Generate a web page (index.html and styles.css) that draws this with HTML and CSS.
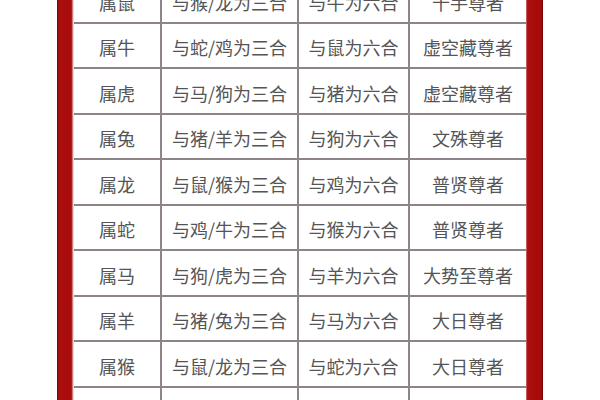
FILE: index.html
```html
<!DOCTYPE html>
<html lang="zh-CN">
<head>
<meta charset="utf-8">
<title>生肖三合六合守护神</title>
<link rel="stylesheet" href="styles.css">
</head>
<body>
<div class="frame">
  <div class="bar bar-left"></div>
  <div class="table">
    <div class="cell">属鼠</div><div class="cell">与猴/龙为三合</div><div class="cell">与牛为六合</div><div class="cell">千手尊者</div>
    <div class="cell">属牛</div><div class="cell">与蛇/鸡为三合</div><div class="cell">与鼠为六合</div><div class="cell">虚空藏尊者</div>
    <div class="cell">属虎</div><div class="cell">与马/狗为三合</div><div class="cell">与猪为六合</div><div class="cell">虚空藏尊者</div>
    <div class="cell">属兔</div><div class="cell">与猪/羊为三合</div><div class="cell">与狗为六合</div><div class="cell">文殊尊者</div>
    <div class="cell">属龙</div><div class="cell">与鼠/猴为三合</div><div class="cell">与鸡为六合</div><div class="cell">普贤尊者</div>
    <div class="cell">属蛇</div><div class="cell">与鸡/牛为三合</div><div class="cell">与猴为六合</div><div class="cell">普贤尊者</div>
    <div class="cell">属马</div><div class="cell">与狗/虎为三合</div><div class="cell">与羊为六合</div><div class="cell">大势至尊者</div>
    <div class="cell">属羊</div><div class="cell">与猪/兔为三合</div><div class="cell">与马为六合</div><div class="cell">大日尊者</div>
    <div class="cell">属猴</div><div class="cell">与鼠/龙为三合</div><div class="cell">与蛇为六合</div><div class="cell">大日尊者</div>
    <div class="cell">属鸡</div><div class="cell">与蛇/牛为三合</div><div class="cell">与龙为六合</div><div class="cell">不动尊者</div>
  </div>
  <div class="bar bar-right"></div>
</div>
</body>
</html>
```
FILE: styles.css
```css
html, body {
  margin: 0;
  padding: 0;
  background: #ffffff;
  overflow: hidden;
  height: 400px;
}

.frame {
  display: flex;
  width: 486px;
  margin: -22px auto 0;
}

.bar {
  flex: none;
}

.bar-left {
  width: 16px;
  background: linear-gradient(to right, #6e0404 0, #990909 1px, #ab0e0e 3px, #a90c0c 14px, #b5302c 15px, #e9c9c6 16px);
}

.bar-right {
  width: 17px;
  background: linear-gradient(to right, #d9a5a2 0, #b3120f 1px, #aa0d0d 4px, #a40b0b 15px, #720404 17px);
}

.table {
  flex: none;
  display: grid;
  grid-template-columns: 88px 137px 111px 116px;
  grid-auto-rows: 45.5px;
  border-left: 1px solid #eedcdc;
  background: #ffffff;
}

.cell {
  box-sizing: border-box;
  display: flex;
  align-items: center;
  justify-content: center;
  padding-top: 4px;
  border-right: 2px solid #8e8387;
  border-bottom: 2px solid #8e8387;
  font-family: "Noto Sans CJK SC", "Noto Sans", sans-serif;
  font-size: 18px;
  color: #555555;
  white-space: nowrap;
}

.cell:nth-child(4n) {
  border-right: none;
}
```
